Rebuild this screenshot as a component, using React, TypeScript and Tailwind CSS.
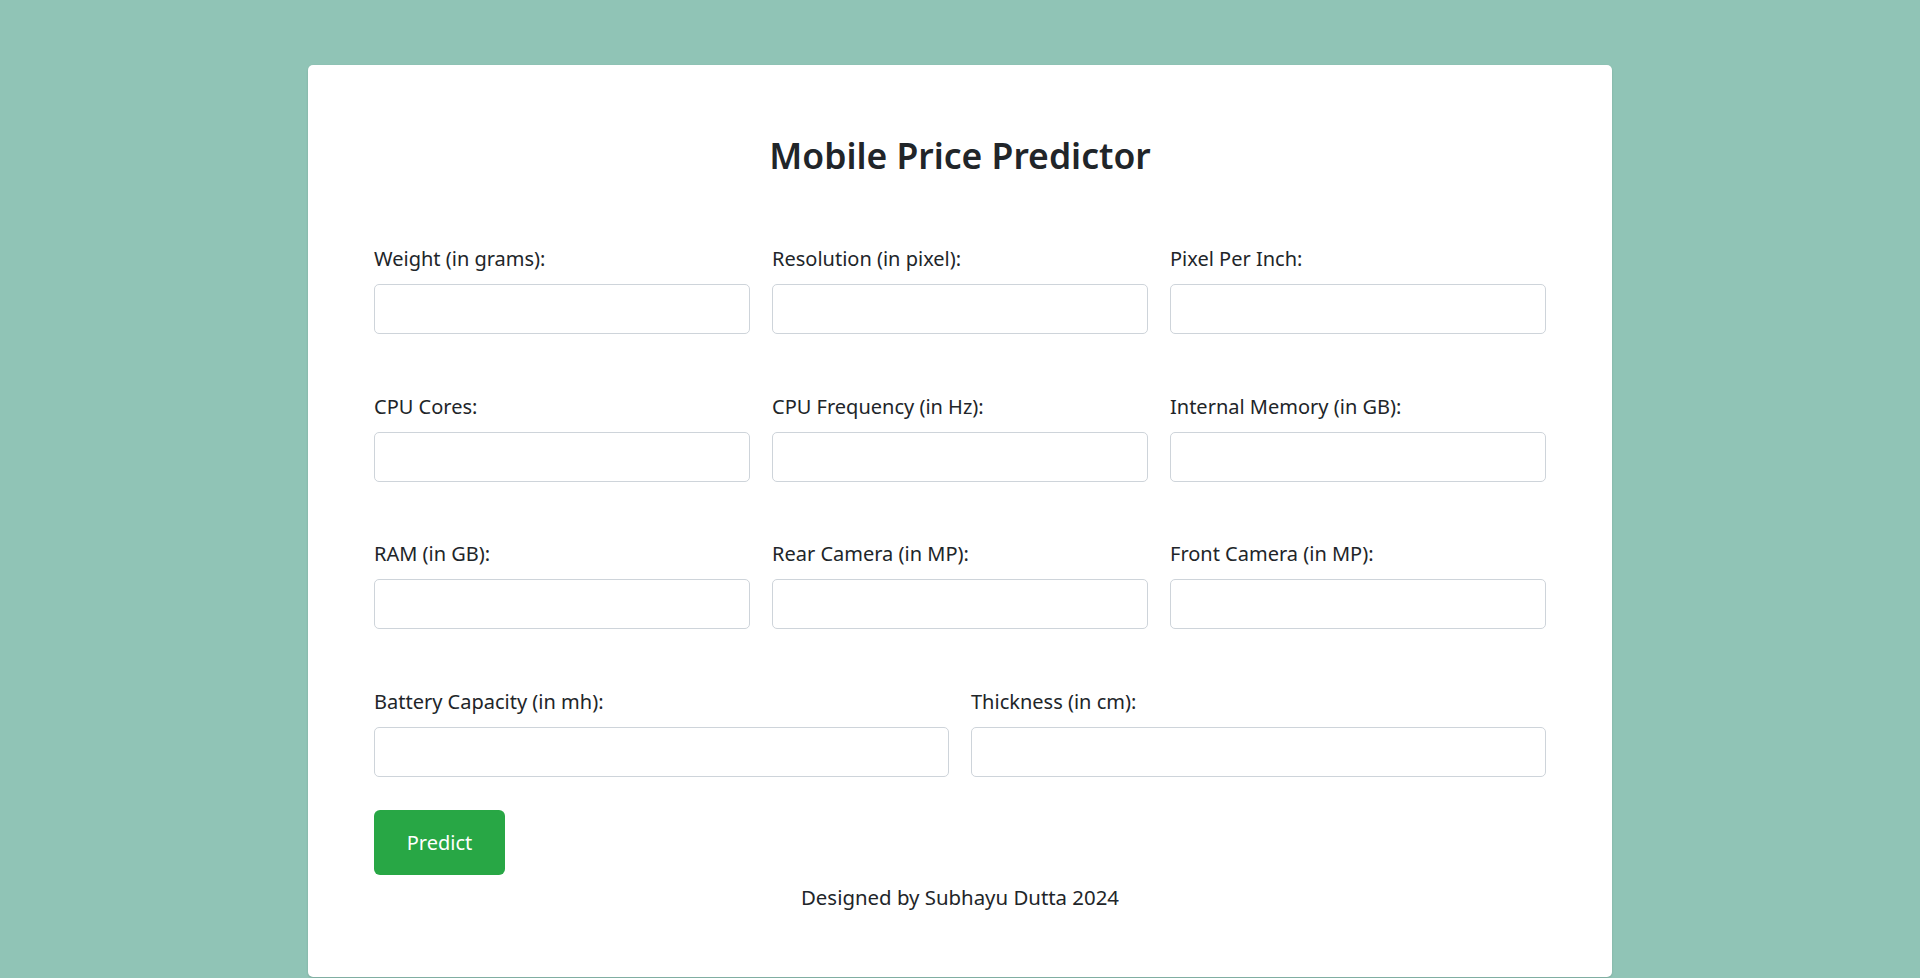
import React from 'react'

type Field = { id: string; label: string }

const rows: Field[][] = [
  [
    { id: 'weight', label: 'Weight (in grams):' },
    { id: 'resolution', label: 'Resolution (in pixel):' },
    { id: 'ppi', label: 'Pixel Per Inch:' },
  ],
  [
    { id: 'cores', label: 'CPU Cores:' },
    { id: 'freq', label: 'CPU Frequency (in Hz):' },
    { id: 'memory', label: 'Internal Memory (in GB):' },
  ],
  [
    { id: 'ram', label: 'RAM (in GB):' },
    { id: 'rear', label: 'Rear Camera (in MP):' },
    { id: 'front', label: 'Front Camera (in MP):' },
  ],
  [
    { id: 'battery', label: 'Battery Capacity (in mh):' },
    { id: 'thickness', label: 'Thickness (in cm):' },
  ],
]

function FormField({ field }: { field: Field }) {
  return (
    <div className="flex flex-col">
      <label htmlFor={field.id} className="text-[20px] leading-[30px] mb-[10px] text-[#212529]">
        {field.label}
      </label>
      <input
        id={field.id}
        type="text"
        className="h-[50px] w-full rounded-[5px] border border-[#ced4da] bg-white px-4 text-[20px] text-[#495057] focus:outline-none"
      />
    </div>
  )
}

export default function App() {
  return (
    <div
      className="min-h-screen bg-[#90c4b6] pt-[65px]"
      style={{ fontFamily: '"Noto Sans", "Open Sans", Arial, sans-serif' }}
    >
      <div className="mx-auto h-[912px] w-[1304px] rounded-[5px] bg-white px-[66px] pt-[66px] shadow-[0_1px_2px_rgba(0,0,0,0.15)]">
        <h2 className="text-center text-[35.5px] font-semibold leading-[48px] text-[#212529]">
          Mobile Price Predictor
        </h2>

        <form className="mt-[65px] flex flex-col gap-y-[57.7px]" onSubmit={e => e.preventDefault()}>
          {rows.map((row, i) => (
            <div key={i} className={row.length === 3 ? 'grid grid-cols-3 gap-x-[22px]' : 'grid grid-cols-2 gap-x-[22px]'}>
              {row.map(f => <FormField key={f.id} field={f} />)}
            </div>
          ))}
        </form>

        <button
          type="submit"
          className="mt-[33px] h-[65px] w-[131px] rounded-[6px] bg-[#28a745] text-[20px] text-white"
        >
          Predict
        </button>

        <p className="mt-[7px] text-center text-[20.4px] leading-[30px] text-[#212529]">
          Designed by Subhayu Dutta 2024
        </p>
      </div>
    </div>
  )
}
